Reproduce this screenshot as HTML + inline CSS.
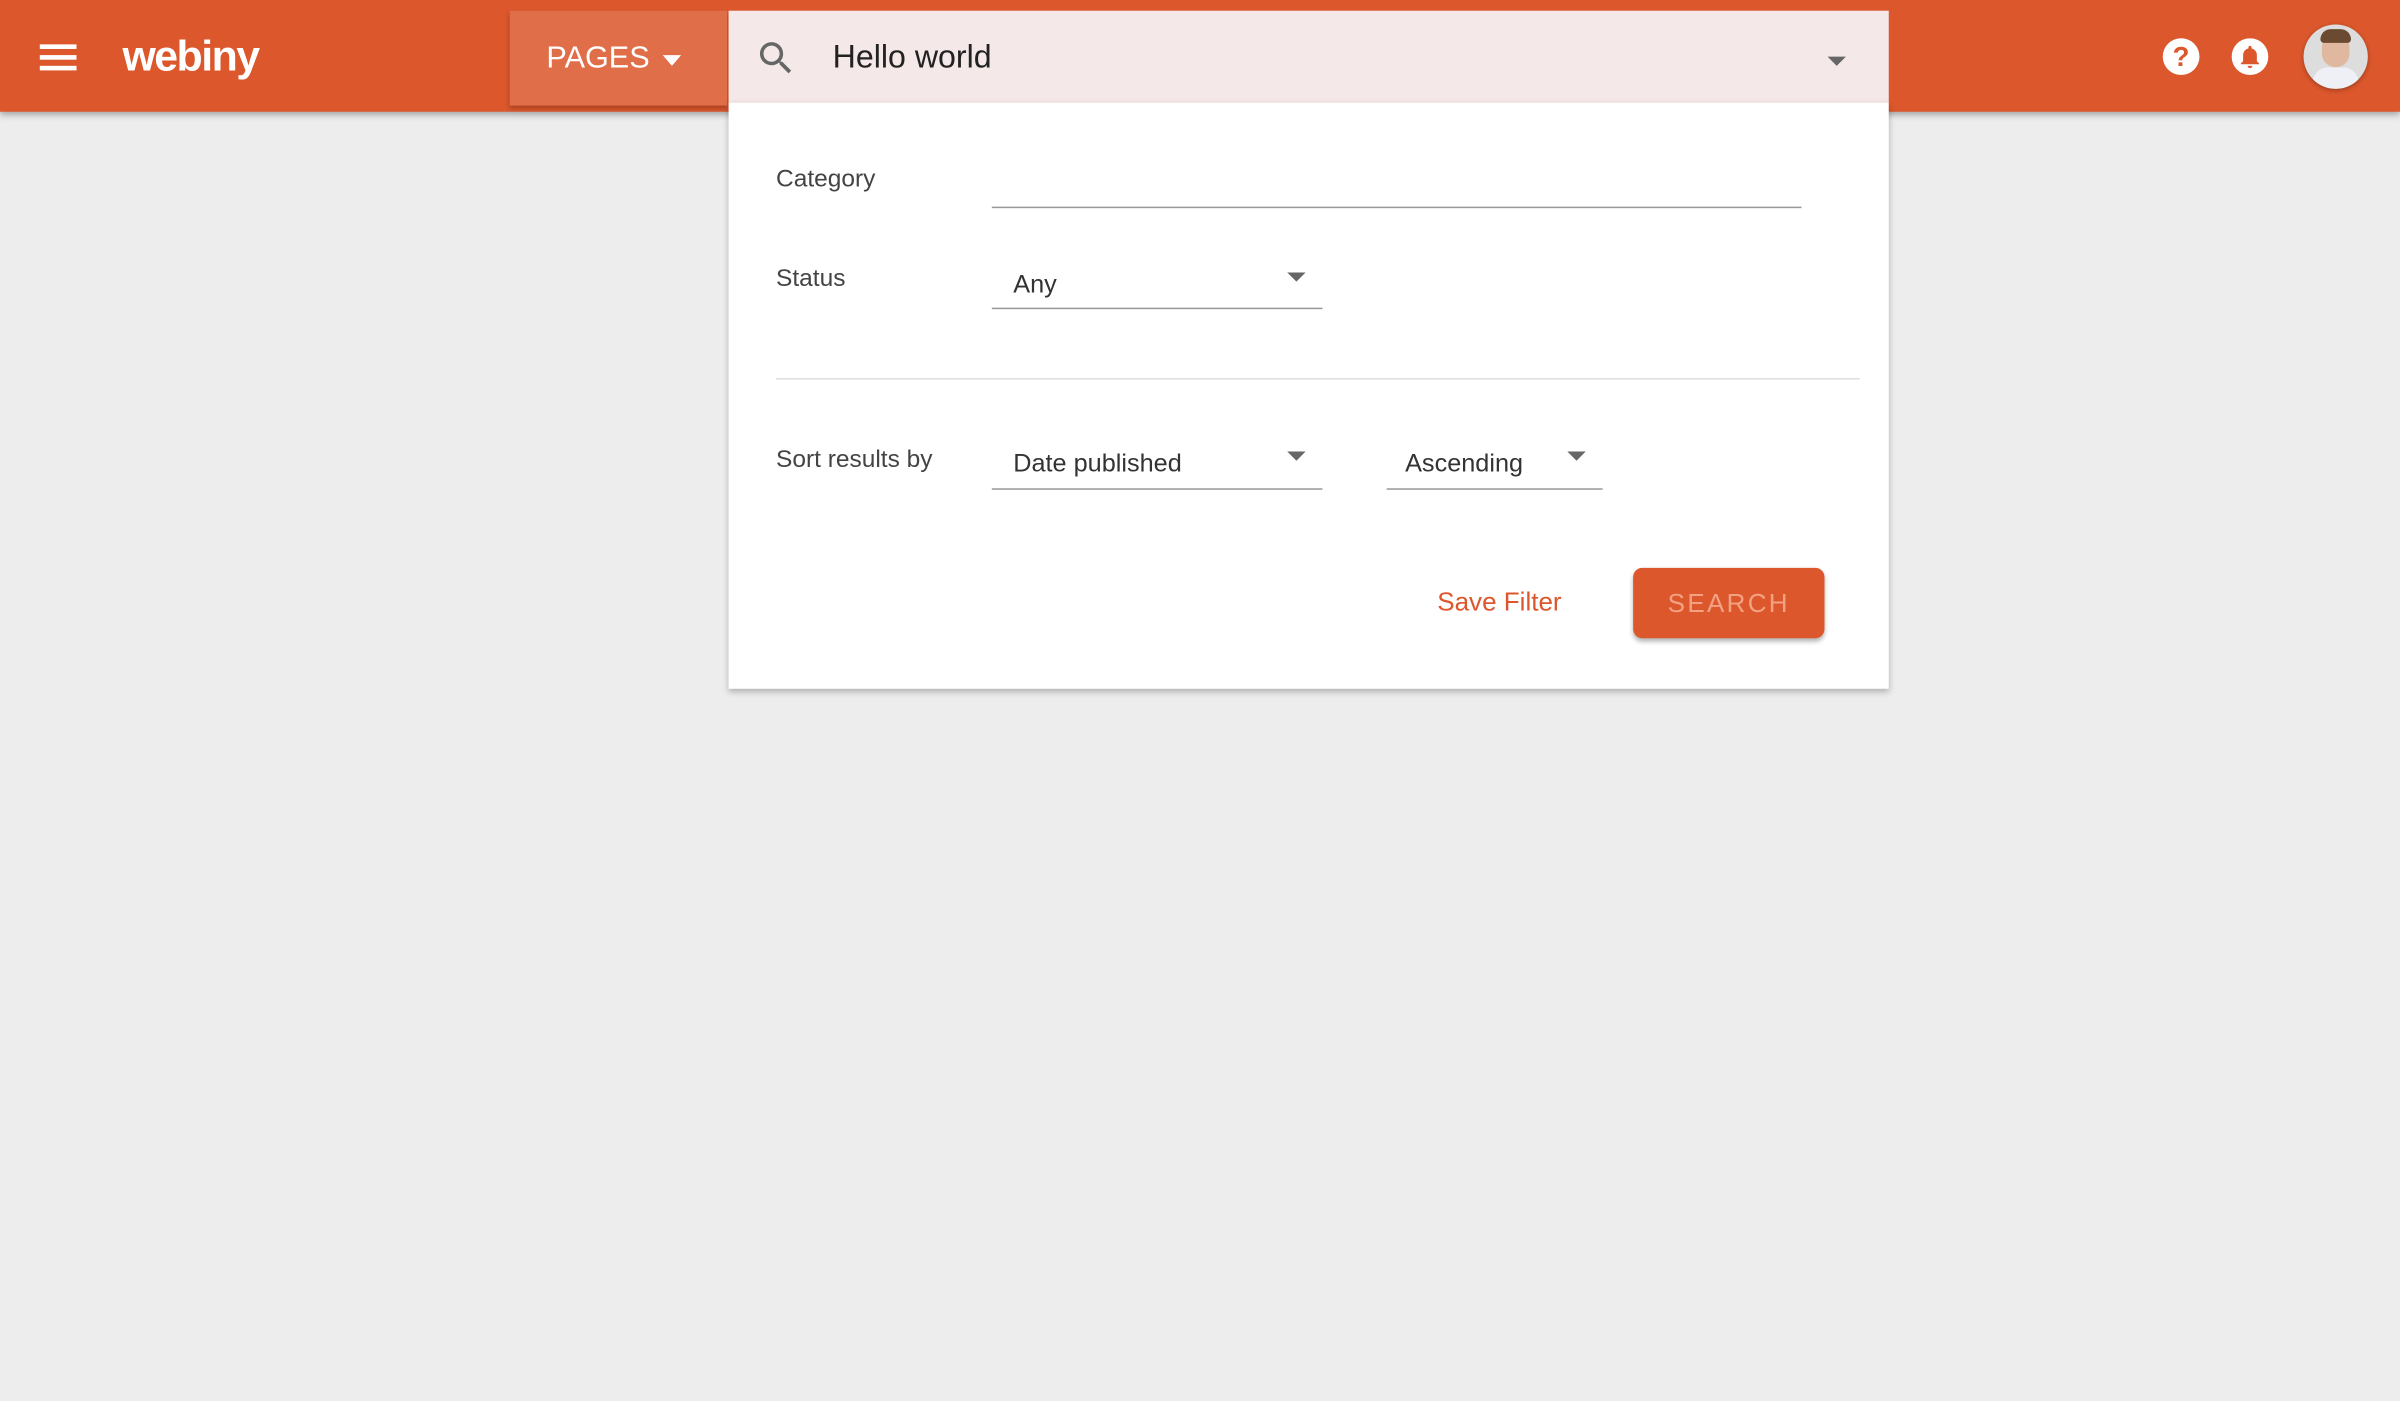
<!DOCTYPE html>
<html><head><meta charset="utf-8"><style>
html,body{margin:0;padding:0;width:2400px;height:1400px;overflow:hidden;background:#ededed;}
#w{position:absolute;left:0;top:0;width:1568px;height:915px;transform:scale(1.5306);transform-origin:0 0;font-family:"Liberation Sans",sans-serif;}
.a{position:absolute;}
.bar{left:0;top:0;width:1568px;height:73px;background:#dc572c;box-shadow:0 2px 4px rgba(0,0,0,.3);}
.lbl{font-size:16px;color:#444;}
.line{height:1px;background:#999;}
.val{font-size:16.5px;color:#333;}
.car{width:0;height:0;border-left:6px solid transparent;border-right:6px solid transparent;border-top:6px solid #666;}
</style></head><body><div id="w">
<div class="a bar"></div>
<div class="a" style="left:26px;top:29px;width:24px;height:3px;background:#fff;box-shadow:0 7px 0 #fff,0 14px 0 #fff"></div>
<div class="a" style="left:80px;top:21px;font-size:28px;font-weight:bold;color:#fff;letter-spacing:-1px">webiny</div>
<div class="a" style="left:333px;top:7px;width:142px;height:62px;background:#e06e48;box-shadow:0 2px 3px rgba(0,0,0,.25)"></div>
<div class="a" style="left:357px;top:27px;font-size:20px;color:#fff">PAGES</div>
<div class="a car" style="left:433px;top:36px;border-top-color:#fff;border-width:7px 6px 0"></div>
<div class="a" style="left:476px;top:7px;width:758px;height:60px;background:#f5e8e8"></div>
<svg class="a" style="left:493px;top:24px" width="28" height="28" viewBox="0 0 24 24"><path fill="#666" d="M15.5 14h-.79l-.28-.27A6.470 6.470 0 0 0 16 9.5 6.5 6.5 0 1 0 9.5 16c1.610 0 3.090-.59 4.230-1.57l.27.28v.79l5 4.990L20.490 19l-4.990-5zm-6 0C7.010 14 5 11.990 5 9.5S7.010 5 9.5 5 14 7.010 14 9.5 11.990 14 9.5 14z"/></svg>
<div class="a" style="left:544px;top:26px;font-size:21px;color:#222">Hello world</div>
<div class="a car" style="left:1194px;top:37px"></div>
<div class="a" style="left:476px;top:67px;width:758px;height:383px;background:#fff;box-shadow:0 2px 4px rgba(0,0,0,.25)"></div>
<div class="a lbl" style="left:507px;top:109px">Category</div>
<div class="a line" style="left:648px;top:135px;width:529px"></div>
<div class="a lbl" style="left:507px;top:174px">Status</div>
<div class="a val" style="left:662px;top:177px">Any</div>
<div class="a car" style="left:841px;top:178px"></div>
<div class="a line" style="left:648px;top:201px;width:216px"></div>
<div class="a" style="left:507px;top:247px;width:708px;height:1px;background:#ddd"></div>
<div class="a lbl" style="left:507px;top:292px">Sort results by</div>
<div class="a val" style="left:662px;top:294px">Date published</div>
<div class="a car" style="left:841px;top:295px"></div>
<div class="a line" style="left:648px;top:319px;width:216px"></div>
<div class="a val" style="left:918px;top:294px">Ascending</div>
<div class="a car" style="left:1024px;top:295px"></div>
<div class="a line" style="left:906px;top:319px;width:141px"></div>
<div class="a" style="left:939px;top:384px;font-size:17px;color:#dc572c">Save Filter</div>
<div class="a" style="left:1067px;top:371px;width:125px;height:46px;background:#dc572c;border-radius:6px;box-shadow:0 2px 3px rgba(0,0,0,.3);color:#f2a283;font-size:17px;letter-spacing:1.5px;text-align:center;line-height:48px">SEARCH</div>
<div class="a" style="left:1413px;top:25px;width:24px;height:24px;border-radius:50%;background:#fff;color:#dc572c;font-weight:bold;font-size:18px;text-align:center;line-height:24px">?</div>
<svg class="a" style="left:1458px;top:25px" width="24" height="24" viewBox="0 0 24 24"><circle cx="12" cy="12" r="12" fill="#fff"/><path fill="#dc572c" d="M12 5a1 1 0 0 0-1 1v.6A4.5 4.5 0 0 0 7.5 11v4l-1.5 1.5V17h12v-.5L16.5 15v-4A4.5 4.5 0 0 0 13 6.6V6a1 1 0 0 0-1-1zm-1.5 13a1.5 1.5 0 0 0 3 0z"/></svg>
<div class="a" style="left:1505px;top:16px;width:42px;height:42px;border-radius:50%;background:#ddd;overflow:hidden;box-shadow:0 1px 3px rgba(0,0,0,.3)">
<div class="a" style="left:12px;top:6px;width:18px;height:22px;border-radius:9px;background:#e0b8a0"></div>
<div class="a" style="left:11px;top:3px;width:20px;height:9px;border-radius:9px 9px 3px 3px;background:#6b4a32"></div>
<div class="a" style="left:6px;top:28px;width:30px;height:20px;border-radius:10px 10px 0 0;background:#eef0f6"></div>
</div>
</div></body></html>
